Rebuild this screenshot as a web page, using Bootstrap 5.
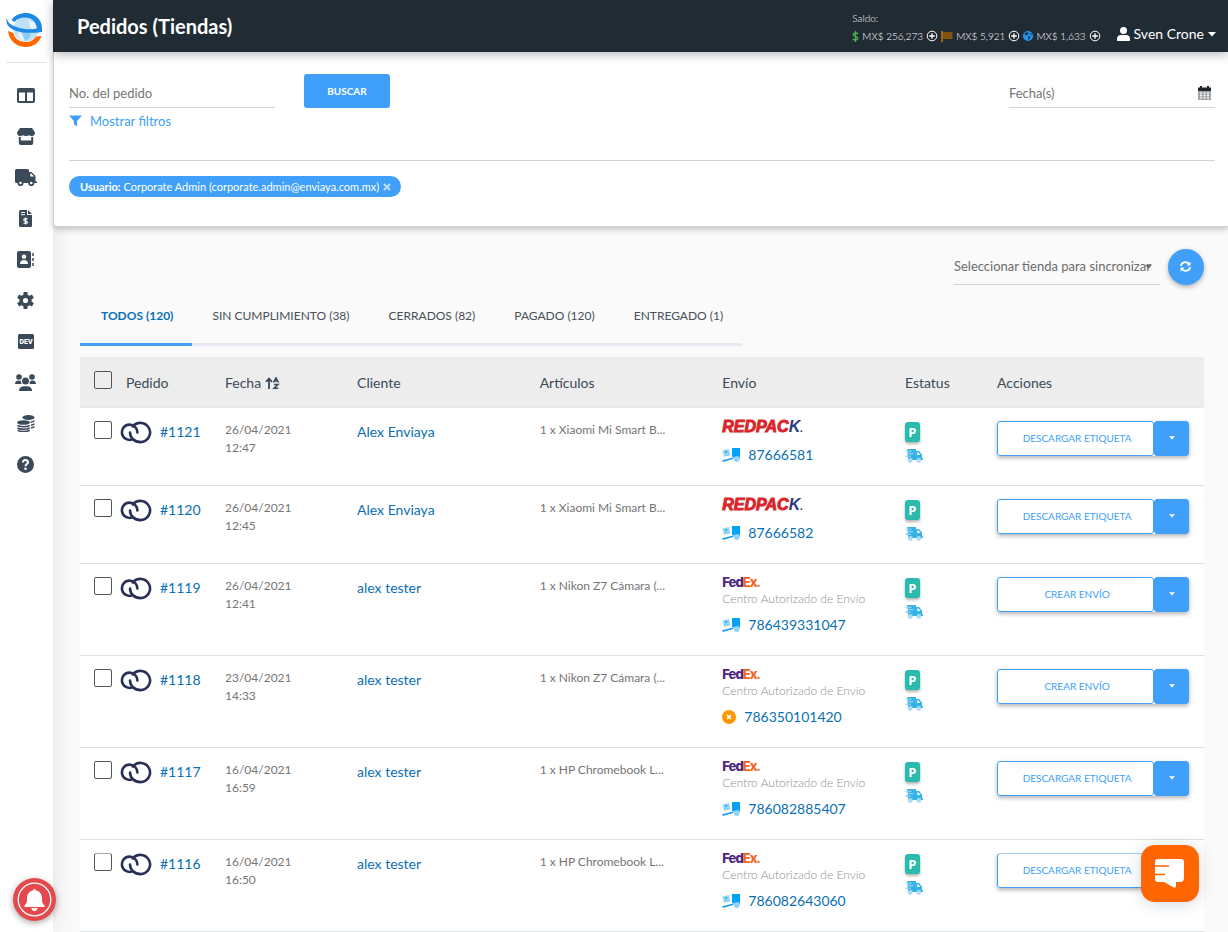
<!DOCTYPE html>
<html lang="es">
<head>
<meta charset="utf-8">
<meta name="viewport" content="width=device-width, initial-scale=1">
<title>Pedidos (Tiendas)</title>
<link href="https://cdn.jsdelivr.net/npm/bootstrap@5.3.0/dist/css/bootstrap.min.css" rel="stylesheet">
<style>
  :root { --azul: #409ff8; --enlace: #0a6fb5; --tinta: #3b4a58; --linea: #ced4da; }
  body { font-family: Lato, sans-serif; font-size: 14px; line-height: 18px; color: var(--tinta); background: #fafafa; }
  a { color: var(--enlace); text-decoration: none; }
  svg { display: block; flex: none; }
  .sidebar { width: 53px; background: #fff; box-shadow: 0 0 24px rgba(0,0,0,.1); color: var(--tinta); }
  .brand { height: 63px; margin: 0 7px 12px 6px; padding-top: 12px; border-bottom: 1px solid #dee2e6; }
  .side-link { height: 41px; padding-right: 2px; color: var(--tinta); }
  .topbar { height: 52px; background: #212b34; color: #fff; padding: 0 12px 0 24px; box-shadow: 0 2px 10px rgba(0,0,0,.3); position: relative; }
  .topbar h1 { font-size: 20px; line-height: 26px; font-weight: 700; }
  .saldo { font-size: 10px; line-height: 18px; font-weight: 300; padding-top: 2px; }
  .saldo .balances { gap: 3px; }
  .saldo button, .user-menu { border: 0; background: none; padding: 0; color: #fff; }
  .user-menu { font-size: 14px; font-weight: 400; }
  .filters { background: #fff; border: solid var(--linea); border-width: 0 0 1px 1px; border-bottom-left-radius: 4px; padding: 22px 13px 29px 15px; box-shadow: 0 2px 6px rgba(0,0,0,.25); }
  .line-field { width: 206px; border-bottom: 1px solid var(--linea); font-size: 13px; }
  .line-field input, .line-field select { appearance: none; height: 29px; border: 0; background: transparent; padding: 0; width: 100%; outline: 0; color: #6c6c6c; }
  .line-field select { height: 36px; }
  .line-field ::placeholder { color: #757575; opacity: 1; }
  .select-caret { right: 8px; top: 16px; color: #666; pointer-events: none; }
  .btn-buscar { --bs-btn-font-size: 10px; width: 86px; height: 34px; margin-left: 29px; background: var(--azul); color: #fff; font-weight: 700; border-radius: 3px; }
  .show-filters { color: var(--azul); font-size: 13px; }
  .filter-rule { border-top: 1px solid var(--linea); margin-top: 29px; padding-top: 15px; }
  .filter-chip { background: var(--azul); color: #fff; font-size: 11px; font-weight: 400; height: 21px; padding: 0 10px 0 11px; }
  .filter-chip button { border: 0; background: none; padding: 0; color: #b9dcfd; }
  .content { padding: 21px 24px 0 27px; }
  .btn-sync { width: 36px; height: 36px; border-radius: 50%; border: 0; background: var(--azul); color: #fff; box-shadow: 0 2px 5px rgba(0,0,0,.3); }
  .tabs-line { border-bottom: 3px solid #e4e9f2; margin-bottom: 11px; font-size: 12px; }
  .tabs-line a { display: block; padding: 22px 19px 18px 20px; color: #495057; margin-bottom: -3px; border-bottom: 3px solid transparent; }
  .tabs-line a.active { padding-left: 21px; color: var(--enlace); font-weight: 700; border-color: var(--azul); }
  .orders { table-layout: fixed; width: 100%; background: #fff; }
  .orders th { background: #ededed; height: 50px; font-weight: 400; padding: 2px 0 0; border-bottom: 1px solid #e4e9ee; }
  .orders td { height: 78px; padding: 13px 0 0; vertical-align: top; border-bottom: 1px solid #dee2e6; }
  .orders .tall td { height: 92px; }
  .orders tr > :first-child { padding-left: 14px; }
  .c-ped { width: 12.9%; } .c-fec { width: 11.75%; } .c-cli { width: 16.25%; } .c-est { width: 8.2%; }
  .orders input { appearance: none; width: 18px; height: 18px; border: 1px solid #555; border-radius: 2px; background: transparent; margin: 0; flex: none; }
  .orders th input { margin: 0 14px 6px 0; }
  .link-lg { font-size: 14px; line-height: 22px; }
  .muted-sm { font-size: 12px; color: #757575; }
  .redpack { font: italic 700 16px/12px "Liberation Sans", sans-serif; color: #d9262a; -webkit-text-stroke: 1px currentColor; }
  .redpack b { color: #263b82; -webkit-text-stroke: 0; }
  .redpack small { font-size: 10px; color: #263b82; -webkit-text-stroke: 0; }
  .fedex { font: 800 13px/10px Inter, sans-serif; color: #4d2482; letter-spacing: -1px; }
  .fedex b { color: #f26522; font-weight: 800; }
  .authorized { font-size: 12px; font-weight: 300; color: #8f8f8f; margin-top: 3px; }
  .tracking { margin-top: 10px; line-height: 20px; }
  .tall .tracking { margin-top: 7px; }
  .paid { width: 15px; height: 20px; border-radius: 3px; background: #2abbac; color: #fff; font: 700 13px/20px "Open Sans", sans-serif; text-align: center; box-shadow: 0 2px 3px rgba(0,0,0,.3); margin: 1px 0 7px; }
  .split { width: 192px; height: 35px; border-radius: 3px; box-shadow: 0 2px 4px rgba(0,0,0,.3); }
  .split .btn { --bs-btn-font-size: 10px; line-height: 16px; border: 1px solid var(--azul); color: var(--azul); background: #fff; border-radius: 3px; padding: 0; }
  .split .btn:first-child { padding-left: 3px; }
  .split .btn + .btn { flex: 0 0 35px; background: var(--azul); color: #fff; }
  .scrolled input, .scrolled .split { clip-path: inset(1px -6px -8px -6px); }
  .bell { position: fixed; left: 13px; bottom: 11px; width: 43px; height: 43px; border: 0; border-radius: 50%; background: #e5484d; padding: 0; box-shadow: 0 2px 6px rgba(0,0,0,.35); }
  .chat { position: fixed; right: 29px; bottom: 30px; width: 58px; height: 57px; border: 0; border-radius: 14px; background: #ff6600; padding: 0; box-shadow: 0 2px 16px rgba(30,60,90,.2); }
</style>
</head>
<body>
<svg width="0" height="0" class="position-absolute" aria-hidden="true">
  <symbol id="loop" viewBox="0 0 30 22"><g fill="none" stroke="#2a2f55" stroke-width="2.500" stroke-linecap="round"><path d="M9.300 11C9.300 16 13.500 20.200 19.300 20.200A9.200 9.200 0 1 0 12 5.300"/><path d="M16.300 11C16.300 6.500 13 3.500 8.800 3.500A7.300 7.300 0 1 0 11.500 17.600"/></g></symbol>
  <symbol id="dolly" viewBox="0 0 18 14"><rect x="1.200" y="1.800" width="6.500" height="6.500" transform="rotate(-12 4 5)" fill="#8fd4fb"/><path d="M3.200 3.400l1.700-.3.200 1.500-1.600.3z" fill="#1399ee"/><path d="M10 0H18v9.500h-5.500A2 2 0 0 1 10 7z" fill="#03a1f7"/><path d="M.3 12.300L11 9.500l.4 1.600L.7 13.900z" fill="#1e9bf0"/><circle cx="14.800" cy="11" r="2.900" fill="#8fd4fb"/></symbol>
  <symbol id="van" viewBox="0 0 18 14"><path d="M2 0h9v2h3l3 3.500V9l1 .5V11H3V8H1.500V6.500H3z" fill="#36b3e6"/><path d="M0 2.200h6.500M1.500 4.700H8M0 7.200h6" stroke="#a9dcf6"/><path d="M12.200 3.500h1.300L15.500 6h-3.300z" fill="#fff"/><circle cx="5.300" cy="11.500" r="2.400" fill="#a8dcf7"/><circle cx="13.800" cy="11.500" r="2.400" fill="#a8dcf7"/></symbol>
  <symbol id="plus" viewBox="0 0 12 12"><circle cx="6" cy="6" r="4.800" fill="none" stroke="#fff"/><path d="M6 3.200v5.600M3.200 6h5.600" stroke="#fff" stroke-width="1.300"/></symbol>
  <symbol id="caret" viewBox="0 0 8 5"><path d="M0 0h8L4 4.500z" fill="currentColor"/></symbol>
</svg>

<div class="d-flex min-vh-100">
  <nav class="sidebar d-flex flex-column flex-shrink-0" aria-label="Principal">
    <a class="brand" href="#" aria-label="Inicio">
      <svg width="37" height="36" viewBox="0 0 37 36"><circle cx="20" cy="17" r="12.500" fill="#bfe1f8"/><path d="M23 9l6 1 2 5-4 4-3-4zM12 20l5 2 1 7-5-3z" fill="#fff" opacity=".65"/><path d="M15 19h10l-1 6-4 4-3-5z" fill="#8fcaf2"/><path d="M2 19c1 10 9 16 18 16 7 0 13-4 15.500-11l-5.500.500C28 28 24 30 20 30 13 30 8.500 26.500 7.500 21z" fill="#ff6600"/><path d="M3 11C12 18 25 18 31 16.500 30 10 26 5.500 19 5.500 14 5.500 11 7 8.500 10L5.500 8C9 3 14 1 20 1c9 0 16 7 16 15v4C23 22 6 21 1 12L0 6z" fill="#1e88e5"/></svg>
    </a>
    <a class="side-link d-flex align-items-center justify-content-center" href="#" aria-label="Panel"><svg width="18" height="15" viewBox="0 0 18 15"><path fill="currentColor" fill-rule="evenodd" d="M2 0h14a2 2 0 0 1 2 2v11a2 2 0 0 1-2 2H2a2 2 0 0 1-2-2V2a2 2 0 0 1 2-2zM2 4.500V13h6V4.500zM10 4.500V13h6V4.500z"/></svg></a>
    <a class="side-link d-flex align-items-center justify-content-center" href="#" aria-label="Tiendas"><svg width="18" height="17" viewBox="0 0 18 17"><path fill="currentColor" d="M3 0h12l3 4.500C18 7 16.500 8 15 8s-2-.8-3-.8S10.500 8 9 8s-2-.8-3-.8S4.500 8 3 8 0 7 0 4.500z"/><path fill="currentColor" fill-rule="evenodd" d="M1.800 9h2v3.500h10.400V9h2v6a2 2 0 0 1-2 2H3.800a2 2 0 0 1-2-2z"/></svg></a>
    <a class="side-link d-flex align-items-center justify-content-center" href="#" aria-label="Envíos"><svg width="22" height="17" viewBox="0 0 22 17"><path fill="currentColor" d="M1.500 0h11A1.500 1.500 0 0 1 14 1.500V3h2.500L20.500 7v5.500H22V14H1.500A1.500 1.500 0 0 1 0 12.500v-11A1.500 1.500 0 0 1 1.500 0z"/><path d="M15.300 4.500h1L19 7.500h-3.700z" fill="#fff"/><g fill="#fff" stroke="currentColor" stroke-width="1.800"><circle cx="5.500" cy="14" r="2.200"/><circle cx="16.300" cy="14" r="2.200"/></g></svg></a>
    <a class="side-link d-flex align-items-center justify-content-center" href="#" aria-label="Facturas"><svg width="13" height="17" viewBox="0 0 13 17"><path fill="currentColor" d="M1.500 0H8v5h5v10.500a1.500 1.500 0 0 1-1.500 1.500h-10A1.500 1.500 0 0 1 0 15.500v-14A1.500 1.500 0 0 1 1.500 0zM9 0l4 4H9z"/><path d="M2 2.500h4M2 4.700h4" stroke="#fff"/><path d="M8.500 9.200C7.500 8.300 4.800 8.500 4.800 9.900s3.700.9 3.700 2.300-2.700 1.600-3.900.6M6.600 7.500V14.500" fill="none" stroke="#fff" stroke-width="1.200"/></svg></a>
    <a class="side-link d-flex align-items-center justify-content-center" href="#" aria-label="Direcciones"><svg width="17" height="17" viewBox="0 0 17 17"><rect width="14" height="17" rx="2" fill="currentColor"/><path d="M16 2v13" stroke="currentColor" stroke-width="1.500" stroke-dasharray="3 2"/><circle cx="7" cy="5.800" r="2.200" fill="#fff"/><path d="M3 13c0-3 1.500-4 4-4s4 1 4 4z" fill="#fff"/></svg></a>
    <a class="side-link d-flex align-items-center justify-content-center" href="#" aria-label="Ajustes"><svg width="17" height="17" viewBox="0 0 17 17"><path fill="none" stroke="currentColor" stroke-width="4" d="M8.500 0v4M8.500 13v4M1.100 4.200l3.500 2M12.400 10.700l3.500 2M1.100 12.700l3.500-2M12.400 6.200l3.500-2"/><circle cx="8.500" cy="8.500" r="4.400" fill="none" stroke="currentColor" stroke-width="3.600"/></svg></a>
    <a class="side-link d-flex align-items-center justify-content-center" href="#" aria-label="Desarrolladores"><svg width="16" height="15" viewBox="0 0 16 15"><rect width="16" height="15" rx="1.500" fill="currentColor"/><text x="8" y="10" text-anchor="middle" font-family="Roboto" font-size="7" font-weight="900" fill="#fff">DEV</text></svg></a>
    <a class="side-link d-flex align-items-center justify-content-center" href="#" aria-label="Usuarios"><svg width="21" height="17" viewBox="0 0 21 17"><g fill="currentColor"><circle cx="4" cy="3" r="2.800"/><circle cx="17" cy="3" r="2.800"/><circle cx="10.500" cy="7" r="3.500"/><path d="M0 10c0-2.500 1.500-3.500 3.500-3.500 1.200 0 2 .3 2.500.8L6.500 10zM21 10c0-2.500-1.500-3.500-3.500-3.500-1.200 0-2 .3-2.500.8L14.500 10zM4 17c0-3 1.500-4.500 4.500-4.800h4C15.500 12.500 17 14 17 17z"/></g></svg></a>
    <a class="side-link d-flex align-items-center justify-content-center" href="#" aria-label="Saldo"><svg width="18" height="17" viewBox="0 0 18 17"><g fill="currentColor"><ellipse cx="11.500" cy="2.500" rx="6" ry="2.500"/><ellipse cx="6.500" cy="7.500" rx="6.300" ry="2.300"/></g><path d="M.5 10.300c2 1.800 10 1.800 12.200 0M.5 12.900c2 1.800 10 1.800 12.200 0M.7 15.200c2 1.800 9.800 1.800 12 0M13.500 7.200c1.800-.2 3.300-.7 4-1.500M14 10.200c1.600-.2 2.800-.7 3.500-1.500M14 13c1.600-.2 2.800-.7 3.500-1.500" fill="none" stroke="currentColor" stroke-width="1.500"/></svg></a>
    <a class="side-link d-flex align-items-center justify-content-center" href="#" aria-label="Ayuda"><svg width="17" height="17" viewBox="0 0 17 17"><circle cx="8.500" cy="8.500" r="8.500" fill="currentColor"/><path d="M6 6.500C6 3.300 11 3.300 11 6.300 11 8.300 8.500 8 8.500 10.200" fill="none" stroke="#fff" stroke-width="2"/><circle cx="8.500" cy="12.800" r="1.300" fill="#fff"/></svg></a>
  </nav>

  <div class="flex-grow-1">
    <header class="topbar d-flex align-items-center">
      <h1 class="mb-0 me-auto">Pedidos (Tiendas)</h1>
      <div class="saldo me-3">
        <div>Saldo:</div>
        <div class="balances d-flex align-items-center">
          <svg width="7" height="11" viewBox="0 0 7 11"><path d="M6 3C5 1.500 1.200 1.700 1.200 3.700s4.600 1.300 4.600 3.500S2 9.500.8 7.900M3.500 0v11" fill="none" stroke="#4caf50" stroke-width="1.400"/></svg>
          <span>MX$ 256,273</span>
          <button type="button" aria-label="Añadir saldo"><svg width="12" height="12"><use href="#plus"/></svg></button>
          <svg width="12" height="11" viewBox="0 0 12 11"><path d="M1 0v11" stroke="#c77a12" stroke-width="1.500"/><path d="M2 1h9.500v7H2z" fill="#80520f"/></svg>
          <span>MX$ 5,921</span>
          <button type="button" aria-label="Añadir guías"><svg width="12" height="12"><use href="#plus"/></svg></button>
          <svg width="10" height="10" viewBox="0 0 10 10"><circle cx="5" cy="5" r="5" fill="#2196f3"/><path d="M1.500 2.500L4.500 1l1 1.500L4 4l-1.500.5zM5 5l2.500.5L6.500 8 5.500 9zM7.500 1.800l1.500 2-1.500.4z" fill="#212b34"/></svg>
          <span>MX$ 1,633</span>
          <button type="button" aria-label="Añadir internacional"><svg width="12" height="12"><use href="#plus"/></svg></button>
        </div>
      </div>
      <button type="button" class="user-menu d-flex align-items-center pt-3">
        <svg width="13" height="14" viewBox="0 0 13 14" class="me-1"><circle cx="6.500" cy="3.500" r="3.500" fill="#fff"/><path d="M0 14v-2c0-2.500 1.500-4 4-4h5c2.500 0 4 1.500 4 4v2z" fill="#fff"/></svg>
        <span>Sven Crone</span>
        <svg width="8" height="5" class="ms-1"><use href="#caret"/></svg>
      </button>
    </header>

    <form class="filters">
      <div class="d-flex align-items-start">
        <div class="line-field pt-1"><input class="d-block" type="text" placeholder="No. del pedido" aria-label="No. del pedido"></div>
        <button type="button" class="btn btn-buscar p-0">BUSCAR</button>
        <div class="line-field pt-1 ms-auto d-flex align-items-center">
          <input type="text" placeholder="Fecha(s)" aria-label="Fecha(s)">
          <svg width="13" height="14" viewBox="0 0 13 14" class="me-1"><path d="M0 1.500h13V5H0z" fill="#212529"/><path d="M3 0v3M10 0v3" stroke="#212529" stroke-width="2"/><path d="M0 5h13v9H0z" fill="#a2a5a8"/><path d="M2 7.200h9M2 9.500h9M2 11.800h9" stroke="#fff" stroke-width="1.300" stroke-dasharray="2 1.500"/></svg>
        </div>
      </div>
      <a href="#" class="show-filters d-inline-flex align-items-center mt-1"><svg width="13" height="12" viewBox="0 0 14 12" class="me-2"><path d="M0 0h14L8.700 6v6L5.300 9.500V6z" fill="currentColor"/></svg>Mostrar filtros</a>
      <div class="filter-rule">
        <span class="filter-chip badge rounded-pill d-inline-flex align-items-center"><span><b>Usuario:</b> Corporate Admin (corporate.admin@enviaya.com.mx)</span><button type="button" class="ms-1" aria-label="Quitar filtro"><svg width="8" height="8" viewBox="0 0 8 8"><path d="M1 1l6 6M7 1L1 7" stroke="currentColor" stroke-width="2.200"/></svg></button></span>
      </div>
    </form>

    <main class="content">
      <div class="d-flex justify-content-end align-items-center gap-2">
        <div class="line-field position-relative"><select class="d-block" aria-label="Tienda"><option>Seleccionar tienda para sincronizar</option></select><svg class="select-caret position-absolute" width="7" height="6"><use href="#caret"/></svg></div>
        <button type="button" class="btn-sync d-flex align-items-center justify-content-center" aria-label="Sincronizar"><svg width="11" height="11" viewBox="0 0 11 11"><path d="M1 5C1.200 1 6.500-.3 9 3M10 6C9.800 10 4.500 11.300 2 8" fill="none" stroke="#fff" stroke-width="1.800"/><path d="M10.500.5v4h-4zM.5 10.500v-4h4z" fill="#fff"/></svg></button>
      </div>
      <nav class="tabs-line d-inline-flex" aria-label="Estado">
        <a class="active" href="#">TODOS (120)</a><a href="#">SIN CUMPLIMIENTO (38)</a><a href="#">CERRADOS (82)</a><a href="#">PAGADO (120)</a><a href="#">ENTREGADO (1)</a>
      </nav>
      <table class="orders">
        <colgroup><col class="c-ped"><col class="c-fec"><col class="c-cli"><col class="c-cli"><col class="c-cli"><col class="c-est"><col></colgroup>
        <thead>
          <tr>
            <th><div class="d-flex align-items-center"><input type="checkbox" aria-label="Seleccionar todos"><span>Pedido</span></div></th>
            <th><span class="d-flex align-items-center">Fecha<svg class="ms-1" width="16" height="12" viewBox="0 0 16 12"><path d="M4 12V2M1 4.800L4 1.500l3 3.300" fill="none" stroke="currentColor" stroke-width="1.800"/><path d="M8.500 5.500L11 .8l2.500 4.700M9.500 4h3M9 7.500h4l-4 3.800h4.300" fill="none" stroke="currentColor" stroke-width="1.500"/></svg></span></th>
            <th>Cliente</th><th>Artículos</th><th>Envío</th><th>Estatus</th><th>Acciones</th>
          </tr>
        </thead>
        <tbody>
          <tr>
            <td><div class="d-flex"><input type="checkbox" aria-label="Pedido 1121"><svg class="mx-2" width="32" height="23"><use href="#loop"/></svg><a class="link-lg" href="#">#1121</a></div></td>
            <td class="muted-sm">26/04/2021<br>12:47</td>
            <td><a class="link-lg" href="#">Alex Enviaya</a></td>
            <td class="muted-sm">1 x Xiaomi Mi Smart B...</td>
            <td><div class="redpack">REDPAC<b>K</b><small>.</small></div><a class="link-lg tracking d-flex align-items-center" href="#"><svg class="me-2" width="18" height="14"><use href="#dolly"/></svg>87666581</a></td>
            <td><div class="paid">P</div><svg width="18" height="14"><use href="#van"/></svg></td>
            <td><div class="split d-flex"><button type="button" class="btn flex-fill">DESCARGAR ETIQUETA</button><button type="button" class="btn d-flex align-items-center justify-content-center" aria-label="Más acciones"><svg width="6" height="4"><use href="#caret"/></svg></button></div></td>
          </tr>
          <tr>
            <td><div class="d-flex"><input type="checkbox" aria-label="Pedido 1120"><svg class="mx-2" width="32" height="23"><use href="#loop"/></svg><a class="link-lg" href="#">#1120</a></div></td>
            <td class="muted-sm">26/04/2021<br>12:45</td>
            <td><a class="link-lg" href="#">Alex Enviaya</a></td>
            <td class="muted-sm">1 x Xiaomi Mi Smart B...</td>
            <td><div class="redpack">REDPAC<b>K</b><small>.</small></div><a class="link-lg tracking d-flex align-items-center" href="#"><svg class="me-2" width="18" height="14"><use href="#dolly"/></svg>87666582</a></td>
            <td><div class="paid">P</div><svg width="18" height="14"><use href="#van"/></svg></td>
            <td><div class="split d-flex"><button type="button" class="btn flex-fill">DESCARGAR ETIQUETA</button><button type="button" class="btn d-flex align-items-center justify-content-center" aria-label="Más acciones"><svg width="6" height="4"><use href="#caret"/></svg></button></div></td>
          </tr>
          <tr class="tall">
            <td><div class="d-flex"><input type="checkbox" aria-label="Pedido 1119"><svg class="mx-2" width="32" height="23"><use href="#loop"/></svg><a class="link-lg" href="#">#1119</a></div></td>
            <td class="muted-sm">26/04/2021<br>12:41</td>
            <td><a class="link-lg" href="#">alex tester</a></td>
            <td class="muted-sm">1 x Nikon Z7 Cámara (...</td>
            <td><div class="fedex">Fed<b>Ex.</b></div><div class="authorized">Centro Autorizado de Envío</div><a class="link-lg tracking d-flex align-items-center" href="#"><svg class="me-2" width="18" height="14"><use href="#dolly"/></svg>786439331047</a></td>
            <td><div class="paid">P</div><svg width="18" height="14"><use href="#van"/></svg></td>
            <td><div class="split d-flex"><button type="button" class="btn flex-fill">CREAR ENVÍO</button><button type="button" class="btn d-flex align-items-center justify-content-center" aria-label="Más acciones"><svg width="6" height="4"><use href="#caret"/></svg></button></div></td>
          </tr>
          <tr class="tall">
            <td><div class="d-flex"><input type="checkbox" aria-label="Pedido 1118"><svg class="mx-2" width="32" height="23"><use href="#loop"/></svg><a class="link-lg" href="#">#1118</a></div></td>
            <td class="muted-sm">23/04/2021<br>14:33</td>
            <td><a class="link-lg" href="#">alex tester</a></td>
            <td class="muted-sm">1 x Nikon Z7 Cámara (...</td>
            <td><div class="fedex">Fed<b>Ex.</b></div><div class="authorized">Centro Autorizado de Envío</div><a class="link-lg tracking d-flex align-items-center" href="#"><svg class="me-2" width="14" height="14" viewBox="0 0 14 14"><circle cx="7" cy="7" r="7" fill="#ff9800"/><path d="M5 5l4 4M9 5L5 9" stroke="#fff" stroke-width="1.700"/></svg>786350101420</a></td>
            <td><div class="paid">P</div><svg width="18" height="14"><use href="#van"/></svg></td>
            <td><div class="split d-flex"><button type="button" class="btn flex-fill">CREAR ENVÍO</button><button type="button" class="btn d-flex align-items-center justify-content-center" aria-label="Más acciones"><svg width="6" height="4"><use href="#caret"/></svg></button></div></td>
          </tr>
          <tr class="tall">
            <td><div class="d-flex"><input type="checkbox" aria-label="Pedido 1117"><svg class="mx-2" width="32" height="23"><use href="#loop"/></svg><a class="link-lg" href="#">#1117</a></div></td>
            <td class="muted-sm">16/04/2021<br>16:59</td>
            <td><a class="link-lg" href="#">alex tester</a></td>
            <td class="muted-sm">1 x HP Chromebook L...</td>
            <td><div class="fedex">Fed<b>Ex.</b></div><div class="authorized">Centro Autorizado de Envío</div><a class="link-lg tracking d-flex align-items-center" href="#"><svg class="me-2" width="18" height="14"><use href="#dolly"/></svg>786082885407</a></td>
            <td><div class="paid">P</div><svg width="18" height="14"><use href="#van"/></svg></td>
            <td><div class="split d-flex"><button type="button" class="btn flex-fill">DESCARGAR ETIQUETA</button><button type="button" class="btn d-flex align-items-center justify-content-center" aria-label="Más acciones"><svg width="6" height="4"><use href="#caret"/></svg></button></div></td>
          </tr>
          <tr class="tall scrolled">
            <td><div class="d-flex"><input type="checkbox" aria-label="Pedido 1116"><svg class="mx-2" width="32" height="23"><use href="#loop"/></svg><a class="link-lg" href="#">#1116</a></div></td>
            <td class="muted-sm">16/04/2021<br>16:50</td>
            <td><a class="link-lg" href="#">alex tester</a></td>
            <td class="muted-sm">1 x HP Chromebook L...</td>
            <td><div class="fedex">Fed<b>Ex.</b></div><div class="authorized">Centro Autorizado de Envío</div><a class="link-lg tracking d-flex align-items-center" href="#"><svg class="me-2" width="18" height="14"><use href="#dolly"/></svg>786082643060</a></td>
            <td><div class="paid">P</div><svg width="18" height="14"><use href="#van"/></svg></td>
            <td><div class="split d-flex"><button type="button" class="btn flex-fill">DESCARGAR ETIQUETA</button><button type="button" class="btn d-flex align-items-center justify-content-center" aria-label="Más acciones"><svg width="6" height="4"><use href="#caret"/></svg></button></div></td>
          </tr>
        </tbody>
      </table>
    </main>
  </div>
</div>

<button type="button" class="bell" aria-label="Notificaciones"><svg width="43" height="43" viewBox="0 0 43 43"><circle cx="21.500" cy="21.500" r="16.300" fill="none" stroke="#fff" stroke-width="1.300"/><path d="M20 12.500a1.500 1.500 0 0 1 3 0c4.500 1 6 4 6 8 0 4 .5 5 2.500 7v1.500h-20v-1.500c2-2 2.500-3 2.500-7 0-4 1.500-7 6-8zM18.500 30h6a3 3 0 0 1-6 0z" fill="#fff"/></svg></button>
<button type="button" class="chat" aria-label="Chat"><svg width="58" height="57" viewBox="0 0 58 57"><path d="M17 14h23q3 0 3 3v16q0 4-4 4h-4v4q-.5 3-3 1l-9-5h-6q-3 0-3-3V17q0-3 3-3z" fill="#fff"/><path d="M14 21h14M14 29.500h10" stroke="#f60" stroke-width="1.600"/></svg></button>

<script src="https://cdn.jsdelivr.net/npm/bootstrap@5.3.0/dist/js/bootstrap.bundle.min.js"></script>
</body>
</html>
